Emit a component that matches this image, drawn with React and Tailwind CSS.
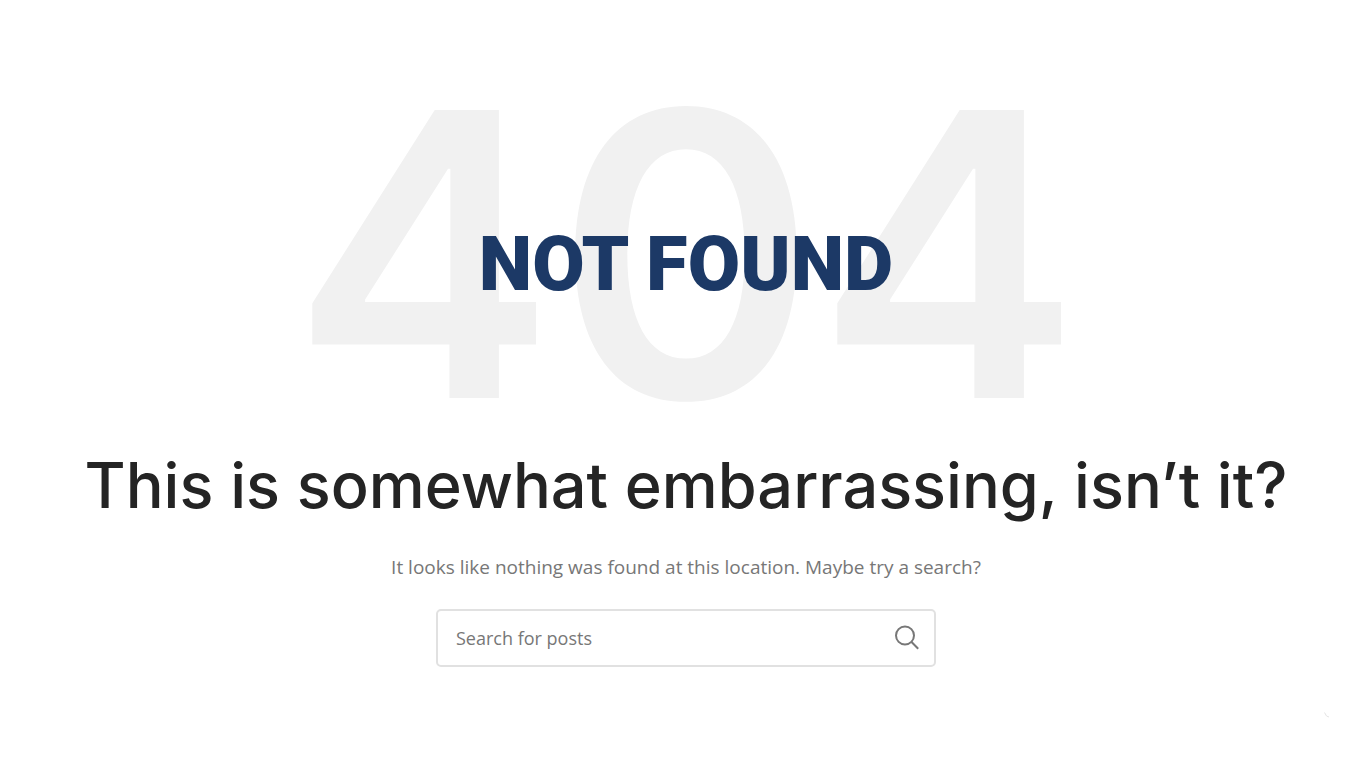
import React from 'react';

const NotFoundPage = () => {
  return (
    <main className="min-h-screen bg-white pt-15 pb-24 pl-[22px] pr-4 flex flex-col items-center text-center">
      {/* 404 Number */}
      <div className="grid place-items-center w-full">
        <span aria-hidden="true" className="col-start-1 row-start-1 font-['Inter',sans-serif] text-[396px] leading-[388px] font-semibold text-[#f1f1f1]">
          404
        </span>
        <h1 className="col-start-1 row-start-1 z-10 mt-5 font-['Roboto',sans-serif] text-[76px] leading-[80px] font-black text-[#1c3966]">
          NOT FOUND
        </h1>
      </div>

      {/* Message */}
      <h2 className="font-['Inter',sans-serif] text-[63px] leading-[74px] font-medium text-[#242424] whitespace-nowrap">
        This is somewhat embarrassing, isn’t it?
      </h2>
      <p className="mt-[30px] font-['Open_Sans',sans-serif] text-[19px] leading-[30px] text-[#777777]">
        It looks like nothing was found at this location. Maybe try a search?
      </p>

      {/* Search */}
      <form role="search" className="mt-[27px] flex w-full max-w-[500px] h-[58px] rounded-[5px] border-2 border-[#e1e1e1]">
        <input
          type="text"
          aria-label="Search for posts"
          placeholder="Search for posts"
          className="flex-1 min-w-0 pl-[18px] bg-transparent outline-none font-['Open_Sans',sans-serif] text-[18px] text-[#777777] placeholder:text-[#777777]"
        />
        <button type="submit" aria-label="Search" className="w-[54px] flex items-center justify-center text-[#777777]">
          <svg viewBox="0 0 24 24" className="w-6 h-6 overflow-visible" fill="none" stroke="currentColor" strokeWidth="2">
            <circle cx="10" cy="9.5" r="9" />
            <path d="M16.3 15.8 L23.2 22.7" />
          </svg>
        </button>
      </form>

      {/* Scroll to top */}
      <button type="button" aria-label="Scroll to top" className="fixed right-[34px] bottom-12 w-2 h-2 text-[#e4e4e4]">
        <svg viewBox="0 0 8 8" className="w-2 h-2" fill="none" stroke="currentColor" strokeWidth="1">
          <path d="M0.5 0.5 L2.5 4 L5 5" />
        </svg>
      </button>
    </main>
  );
};

export default NotFoundPage;
